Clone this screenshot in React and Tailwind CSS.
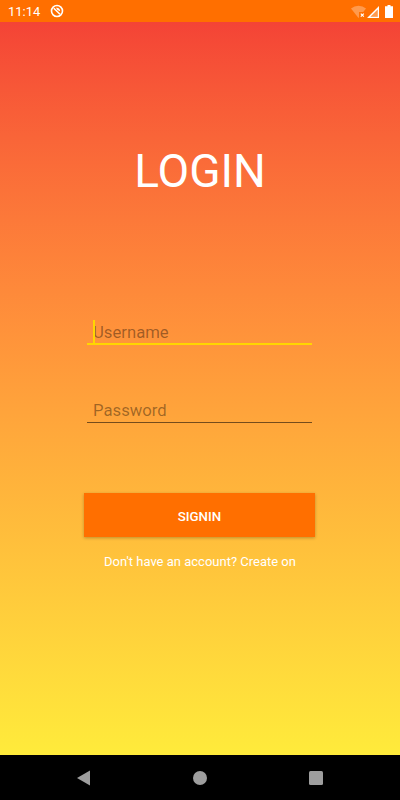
export default function App() {
  return (
    <div className="w-[400px] h-[800px] flex flex-col overflow-hidden font-['Roboto',sans-serif]">
      <div className="h-[22px] shrink-0 bg-[#ff6f00] flex items-center justify-between pl-[8px] pr-[7px] text-white">
        <div className="flex items-center">
          <span className="text-[13px] leading-none">11:14</span>
          <svg className="ml-[10px]" width="14" height="14" viewBox="0 0 14 14" fill="none">
            <circle cx="7" cy="7" r="5.5" stroke="#fff" strokeWidth="1.6" />
            <path d="M3.8 4.2 10 10.2" stroke="#fff" strokeWidth="1.6" />
            <path d="M6 3.8a3.4 3.4 0 0 1 4.2 3.4L7.4 6z" fill="#fff" />
          </svg>
        </div>
        <div className="flex items-center">
          <svg width="15" height="13" viewBox="0 0 15 13">
            <path d="M0 3.5a11.5 11.5 0 0 1 15 0L7.5 13z" fill="#fff" fillOpacity="0.3" />
            <rect x="8" y="7" width="7" height="6" fill="#ff6f00" />
            <path d="M9.8 8.6l3 3M12.8 8.6l-3 3" stroke="#fff" strokeWidth="1.2" />
          </svg>
          <svg width="12" height="12" viewBox="0 0 12 12" className="ml-[1px] mt-[1px]">
            <path fillRule="evenodd" d="M0 12 12 0v12zM3.4 10.7h7.3V3.4z" fill="#fff" />
            <path d="M3.4 10.7h7.3V3.4z" fill="#fff" fillOpacity="0.3" />
          </svg>
          <svg width="8" height="13" viewBox="0 0 8 13" className="ml-[6px]">
            <path d="M2.5 0h3v1.2H8V13H0V1.2h2.5z" fill="#fff" />
          </svg>
        </div>
      </div>
      <main className="flex-1 flex flex-col items-center bg-gradient-to-b from-[#f44336] to-[#ffeb3b]">
        <h1 className="mt-[123px] text-[46px] leading-[53px] font-normal text-white">LOGIN</h1>
        <div className="mt-[102px] self-start ml-[87px] w-[225px] h-[45px] border-b-2 border-[#ffd600] relative flex items-end">
          <span className="absolute left-[6px] top-[20px] w-[2px] h-[23px] bg-[#ffd600]" />
          <span className="pl-[6px] text-[16.7px] leading-[20px] text-[#00000061]">Username</span>
        </div>
        <div className="mt-[33px] self-start ml-[87px] w-[225px] h-[45px] border-b border-[#0000008a] flex items-end">
          <span className="pl-[6px] text-[16.7px] leading-[22px] text-[#00000061]">Password</span>
        </div>
        <button className="mt-[70px] self-start ml-[84px] w-[231px] h-[44px] pt-[3px] bg-[#ff6f00] text-white text-[13.3px] font-medium shadow-[0_1px_3px_rgba(0,0,0,0.25)]">SIGNIN</button>
        <p className="mt-[16px] text-[13px] leading-[17px] text-white">Don't have an account? Create on</p>
      </main>
      <div className="h-[45px] shrink-0 bg-black flex items-center justify-center gap-[100px]">
        <svg width="16" height="16" viewBox="0 0 16 16"><path d="M14 .5v15L1 8z" fill="#9e9e9e" /></svg>
        <svg width="16" height="16" viewBox="0 0 16 16"><circle cx="8" cy="8" r="7" fill="#9e9e9e" /></svg>
        <svg width="16" height="16" viewBox="0 0 16 16"><rect x="1" y="1" width="14" height="14" rx="1.5" fill="#9e9e9e" /></svg>
      </div>
    </div>
  );
}
